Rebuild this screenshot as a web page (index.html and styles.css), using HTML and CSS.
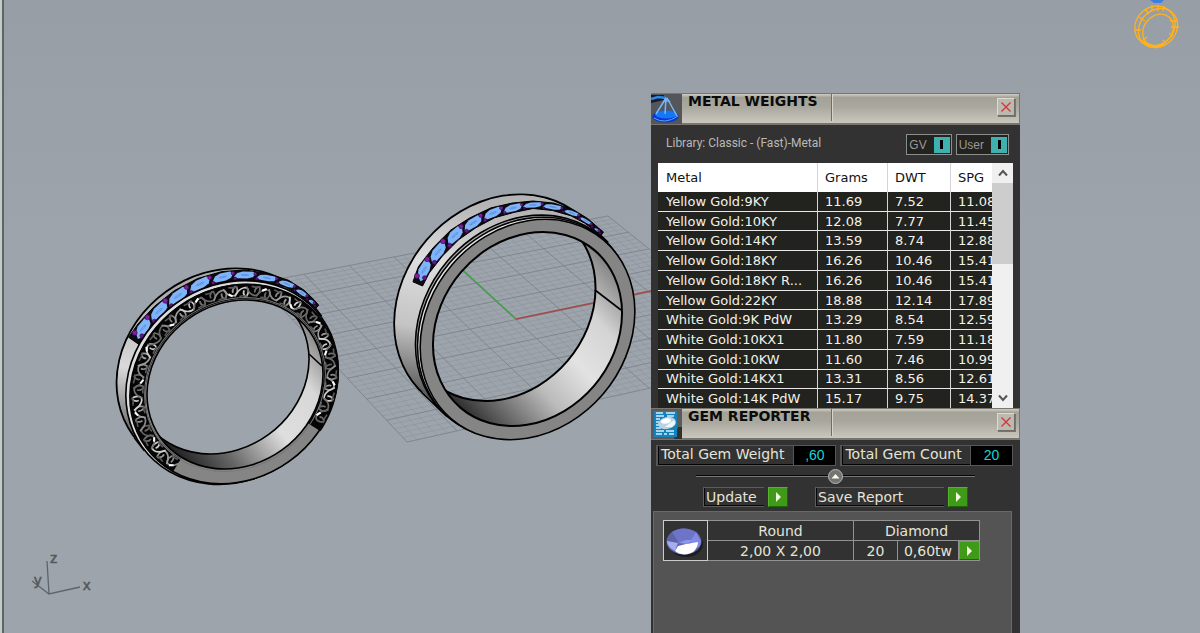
FILE: index.html
```html
<!DOCTYPE html>
<html lang="en">
<head>
<meta charset="utf-8">
<title>Ring Design Viewport</title>
<link rel="stylesheet" href="styles.css">
</head>
<body>
<main class="viewport">
  <svg class="scene" aria-label="Perspective viewport with two rings">
    <defs>
      <linearGradient id="bodyR" gradientUnits="userSpaceOnUse" x1="470" y1="200" x2="430" y2="420">
        <stop offset="0" stop-color="#b4b4b4"/><stop offset=".3" stop-color="#dedede"/><stop offset=".6" stop-color="#c4c4c4"/><stop offset=".85" stop-color="#6a6a6a"/><stop offset="1" stop-color="#333"/>
      </linearGradient>
      <linearGradient id="innerR" gradientUnits="userSpaceOnUse" x1="445" y1="400" x2="625" y2="235">
        <stop offset="0" stop-color="#222"/><stop offset=".1" stop-color="#555"/><stop offset=".32" stop-color="#bbb"/><stop offset=".5" stop-color="#e2e2e2"/><stop offset=".68" stop-color="#d4d4d4"/><stop offset=".85" stop-color="#8c8c8c"/><stop offset="1" stop-color="#222"/>
      </linearGradient>
      <linearGradient id="bodyL" gradientUnits="userSpaceOnUse" x1="160" y1="290" x2="140" y2="450">
        <stop offset="0" stop-color="#aaa"/><stop offset=".5" stop-color="#dadada"/><stop offset=".8" stop-color="#888"/><stop offset="1" stop-color="#333"/>
      </linearGradient>
      <linearGradient id="innerL" gradientUnits="userSpaceOnUse" x1="165" y1="445" x2="325" y2="325">
        <stop offset="0" stop-color="#1c1c1c"/><stop offset=".22" stop-color="#666"/><stop offset=".5" stop-color="#dedede"/><stop offset=".75" stop-color="#d8d8d8"/><stop offset="1" stop-color="#666"/>
      </linearGradient>
      <mask id="frontR" maskUnits="userSpaceOnUse" x="380" y="180" width="270" height="270"><rect x="380" y="180" width="270" height="270" fill="#fff"/><ellipse cx="527.5" cy="329" rx="103.4" ry="87.5" transform="rotate(-49.5 527.5 329)" fill="#000"/></mask>
      <mask id="backR" maskUnits="userSpaceOnUse" x="380" y="180" width="270" height="270"><rect x="380" y="180" width="270" height="270" fill="#fff"/><ellipse cx="501" cy="304" rx="103.4" ry="87.5" transform="rotate(-49.5 501 304)" fill="#000"/></mask>
      <clipPath id="holeR"><ellipse cx="527.5" cy="329" rx="103.4" ry="87.5" transform="rotate(-49.5 527.5 329)"/></clipPath>
      <mask id="frontL" maskUnits="userSpaceOnUse" x="100" y="250" width="260" height="250"><rect x="100" y="250" width="260" height="250" fill="#fff"/><ellipse cx="235" cy="384.5" rx="91.6" ry="80.6" transform="rotate(-35.7 235 384.5)" fill="#000"/></mask>
      <mask id="backL" maskUnits="userSpaceOnUse" x="100" y="250" width="260" height="250"><rect x="100" y="250" width="260" height="250" fill="#fff"/><ellipse cx="221" cy="369.5" rx="91.6" ry="80.6" transform="rotate(-35.7 221 369.5)" fill="#000"/></mask>
      <clipPath id="holeL"><ellipse cx="235" cy="384.5" rx="91.6" ry="80.6" transform="rotate(-35.7 235 384.5)"/></clipPath>
    </defs>

    <g id="grid" class="grid"></g>
    <path d="M516 319 440 249" stroke="#43a047" stroke-width="1.5"/>
    <path d="M516 319 790 262" stroke="#a24a4a" stroke-width="1.6"/>

    <!-- left ring -->
    <g fill="none" stroke="#000" stroke-width="1.6">
      <g mask="url(#frontL)">
        <path d="M134.9 437.3 144.9 450.3M311.1 303.7 321.1 316.7" stroke-width="3"/>
        <ellipse cx="223" cy="370.5" rx="110.6" ry="97" transform="rotate(-35.7 223 370.5)" stroke-width="2.4"/>
        <g clip-path="url(#backDiscL)"><rect x="100" y="250" width="260" height="250" fill="url(#bodyL)" stroke="none"/></g>
        <path d="M134.9 437.3 311.1 303.7 321.1 316.7 144.9 450.3Z" fill="url(#bodyL)" stroke="none"/>
        <g id="gemsL"></g>
        <ellipse cx="232" cy="382.5" rx="110.6" ry="97" transform="rotate(-35.7 232 382.5)" fill="#ddd"/>
        <ellipse cx="234" cy="384" rx="108.5" ry="95" transform="rotate(-35.7 234 384)" fill="#858585"/>
        <g id="filigree"></g>
        <ellipse cx="235" cy="384.5" rx="94" ry="83" transform="rotate(-35.7 235 384.5)" stroke="#777" stroke-width="1"/>
      </g>
      <g clip-path="url(#holeL)">
        <rect x="100" y="250" width="260" height="250" fill="url(#innerL)" mask="url(#backL)" stroke="none"/>
        <path d="M309 354 322 366"/>
        <ellipse cx="221" cy="369.5" rx="91.6" ry="80.6" transform="rotate(-35.7 221 369.5)"/>
      </g>
      <ellipse cx="235" cy="384.5" rx="91.6" ry="80.6" transform="rotate(-35.7 235 384.5)"/>
    </g>

    <!-- right ring -->
    <g fill="none" stroke="#000" stroke-width="1.6">
      <g mask="url(#frontR)">
        <path d="M422.2 391.9 447.2 415.9M582.8 219.1 607.8 243.1" stroke-width="3"/>
        <ellipse cx="502.5" cy="305.5" rx="118.2" ry="100" transform="rotate(-49.5 502.5 305.5)" stroke-width="2.4"/>
        <g clip-path="url(#backDiscR)"><rect x="380" y="180" width="270" height="270" fill="url(#bodyR)" stroke="none"/></g>
        <path d="M422.2 391.9 582.8 219.1 607.8 243.1 447.2 415.9Z" fill="url(#bodyR)" stroke="none"/>
        <g id="gemsR"></g>
        <ellipse cx="523.5" cy="326" rx="118.2" ry="100" transform="rotate(-49.5 523.5 326)" fill="#aaa"/>
        <ellipse cx="525.5" cy="328" rx="118" ry="100" transform="rotate(-49.5 525.5 328)" fill="#e4e4e4"/>
        <ellipse cx="527.5" cy="329.5" rx="117.4" ry="99.4" transform="rotate(-49.5 527.5 329.5)" fill="#858585"/>
      </g>
      <g clip-path="url(#holeR)">
        <rect x="380" y="180" width="270" height="270" fill="url(#innerR)" mask="url(#backR)" stroke="none"/>
        <path d="M595 290 621 310"/>
        <ellipse cx="501" cy="304" rx="103.4" ry="87.5" transform="rotate(-49.5 501 304)" stroke-width="2"/>
      </g>
      <ellipse cx="527.5" cy="329" rx="103.4" ry="87.5" transform="rotate(-49.5 527.5 329)" stroke-width="2"/>
    </g>
    <clipPath id="backDiscL"><ellipse cx="223" cy="370.5" rx="110" ry="96.4" transform="rotate(-35.7 223 370.5)"/></clipPath>
    <clipPath id="backDiscR"><ellipse cx="502.5" cy="305.5" rx="117.6" ry="99.4" transform="rotate(-49.5 502.5 305.5)"/></clipPath>

    <!-- wireframe ring -->
    <g fill="none" stroke="#ffb21c" stroke-width="1.3">
      <ellipse cx="1155" cy="26" rx="21" ry="19" transform="rotate(-40 1155 26)"/>
      <ellipse cx="1158" cy="28" rx="21" ry="18" transform="rotate(-45 1158 28)"/>
      <ellipse cx="1158" cy="30" rx="17" ry="14" transform="rotate(-50 1158 30)"/>
      <path d="M1152 5v6M1158 5v6M1164 6l-1 5M1145 9l4 5M1139 17l6 4M1135 30h6M1170 21h8M1171 27h8M1142 41l5-4M1150 48l2-4M1166 44l-3-4M1173 36l-4-3"/>
      <path d="M1143 42q12 8 21 2" stroke-width="3"/>
    </g>
    <path d="M1150 0h14l-3 3h-7z" fill="#3f7de0"/>

    <!-- axis gizmo -->
    <path d="M47 561 49 594 80 587M49 594 32 581" class="gizmo-line"/>
    <g class="gizmo-text"><text x="50" y="563">z</text><text x="83" y="590">x</text><text x="34" y="585">y</text></g>
  </svg>

  <div class="dock">
    <section class="window">
      <header class="titlebar">
        <svg class="titleicon" viewBox="0 0 31 30" aria-hidden="true">
          <rect width="31" height="30" fill="#55565a"/>
          <path d="M0 1h13v5L0 9z" fill="#171b2c"/>
          <path d="M0 5 7 3 15 4" stroke="#2c8ae8" stroke-width="2.500" fill="none"/>
          <path d="M15 3 20 8 12 8z" fill="#4fa0f5"/>
          <ellipse cx="14.500" cy="22.500" rx="13" ry="6" fill="#0636d6"/><ellipse cx="15" cy="20.500" rx="11" ry="4" fill="#1677f3"/>
          <path d="M15 4 5 20M16 4 26 22M15 4 14 20" stroke="#76b6ff" stroke-width="1.500" fill="none"/>
          <path d="M3 24q11 7 24-2" stroke="#63a5ff" fill="none"/>
        </svg>
        <h2 class="title">METAL WEIGHTS</h2>
        <button class="close" type="button" aria-label="Close Metal Weights"><svg viewBox="0 0 12 12"><path d="M1.500 1.500 10.500 10.500M10.500 1.500 1.500 10.500"/></svg></button>
      </header>
      <div class="metal">
        <div class="library">
          <span class="library-name">Library: Classic - (Fast)-Metal</span>
          <label class="toggle">GV<input type="checkbox" checked></label>
          <label class="toggle">User<input type="checkbox" checked></label>
        </div>
        <div class="list">
          <div class="list-view">
            <table class="metals">
              <colgroup><col class="c-metal"><col class="c-grams"><col class="c-dwt"><col></colgroup>
              <thead><tr><th>Metal</th><th>Grams</th><th>DWT</th><th>SPG</th></tr></thead>
              <tbody>
                <tr><td>Yellow Gold:9KY</td><td>11.69</td><td>7.52</td><td>11.08</td></tr>
                <tr><td>Yellow Gold:10KY</td><td>12.08</td><td>7.77</td><td>11.45</td></tr>
                <tr><td>Yellow Gold:14KY</td><td>13.59</td><td>8.74</td><td>12.88</td></tr>
                <tr><td>Yellow Gold:18KY</td><td>16.26</td><td>10.46</td><td>15.41</td></tr>
                <tr><td>Yellow Gold:18KY R...</td><td>16.26</td><td>10.46</td><td>15.41</td></tr>
                <tr><td>Yellow Gold:22KY</td><td>18.88</td><td>12.14</td><td>17.89</td></tr>
                <tr><td>White Gold:9K PdW</td><td>13.29</td><td>8.54</td><td>12.59</td></tr>
                <tr><td>White Gold:10KX1</td><td>11.80</td><td>7.59</td><td>11.18</td></tr>
                <tr><td>White Gold:10KW</td><td>11.60</td><td>7.46</td><td>10.99</td></tr>
                <tr><td>White Gold:14KX1</td><td>13.31</td><td>8.56</td><td>12.61</td></tr>
                <tr><td>White Gold:14K PdW</td><td>15.17</td><td>9.75</td><td>14.37</td></tr>
              </tbody>
            </table>
          </div>
          <div class="scrollbar">
            <button type="button" aria-label="Scroll up"><svg viewBox="0 0 10 8"><path d="M1 6.500 5 2 9 6.500"/></svg></button>
            <div class="thumb"></div>
            <button type="button" aria-label="Scroll down"><svg viewBox="0 0 10 8"><path d="M1 1.500 5 6 9 1.500"/></svg></button>
          </div>
        </div>
      </div>
    </section>

    <section class="window window-gems">
      <header class="titlebar">
        <svg class="titleicon" viewBox="0 0 31 30" aria-hidden="true">
          <rect width="31" height="30" fill="#5b5b5b"/><path d="M27 18h4v12h-8z" fill="#303030"/>
          <rect x="3" y="2" width="23" height="26" fill="#1682bd"/>
          <path d="M5 4h7M15 4h9M5 7h8M16 7h7M5 10h4M5 13h3M5 16h4M5 19h5M5 22h8M15 22h8M5 25h6M13 25h3M18 25h5" stroke="#d8eefa" stroke-width="1.500"/>
          <ellipse cx="16" cy="14" rx="9" ry="6" transform="rotate(-12 16 14)" fill="#b9d3e2"/>
          <ellipse cx="15" cy="12" rx="5" ry="2.500" transform="rotate(-12 15 12)" fill="#fff"/><path d="M14 18 23 11q3 4-2 7z" fill="#eef6fa"/>
        </svg>
        <h2 class="title">GEM REPORTER</h2>
        <button class="close" type="button" aria-label="Close Gem Reporter"><svg viewBox="0 0 12 12"><path d="M1.500 1.500 10.500 10.500M10.500 1.500 1.500 10.500"/></svg></button>
      </header>
      <div class="totals">
        <div class="total total-weight"><span>Total Gem Weight</span><output>,60</output></div>
        <div class="total total-count"><span>Total Gem Count</span><output>20</output></div>
      </div>
      <div class="divider">
        <button type="button" class="knob" aria-label="Collapse"><svg viewBox="0 0 17 17"><circle cx="8.500" cy="8.500" r="7" fill="#747474" stroke="#b9b9b0"/><path d="M4.500 10.500h8L8.500 6z" fill="#fffbe8"/></svg></button>
      </div>
      <div class="actions">
        <span class="action-name action-update" id="update">Update</span>
        <button class="go" type="button" aria-labelledby="update"><svg viewBox="0 0 18 18"><path d="M7 4 12 9 7 14z"/></svg></button>
        <span class="action-name action-save" id="save">Save Report</span>
        <button class="go" type="button" aria-labelledby="save"><svg viewBox="0 0 18 18"><path d="M7 4 12 9 7 14z"/></svg></button>
      </div>
      <div class="report">
        <table class="gem">
          <colgroup><col class="g-icon"><col class="g-shape"><col class="g-count"><col class="g-weight"><col class="g-go"></colgroup>
          <tbody>
          <tr>
            <td rowspan="2" class="gem-icon"><svg viewBox="0 0 42 38" aria-label="Round gem">
              <ellipse cx="22" cy="22" rx="17" ry="13" fill="#1d1d1d"/>
              <ellipse cx="20" cy="19.500" rx="17.500" ry="13" fill="#5d63a6"/>
              <path d="M8 10 Q19 3 32 10L29 18 15 21z" fill="#6e75c8"/>
              <path d="M3 19 14 21 11 29Q3 25 3 19z" fill="#a4adee"/>
              <path d="M32 10 37 19Q37 24 33 26L26 20z" fill="#828ae6"/>
              <path d="M11 29 14 24 22 22 34 20Q33 32 20 32.500 14 32 11 29z" fill="#fff"/>
              <path d="M14 21 22 18 29 18 24 22z" fill="#8d96ed"/>
            </svg></td>
            <td>Round</td><td colspan="3">Diamond</td>
          </tr>
          <tr><td>2,00 X 2,00</td><td>20</td><td>0,60tw</td><td class="go-cell"><button class="go" type="button" aria-label="Open gem row"><svg viewBox="0 0 18 18"><path d="M7 4 12 9 7 14z"/></svg></button></td></tr>
          </tbody>
        </table>
      </div>
    </section>
  </div>
</main>
<script src="scene.js"></script>
</body>
</html>
```
FILE: styles.css
```css
* { box-sizing: border-box; }
body { margin: 0; font-family: "DejaVu Sans", Verdana, sans-serif; font-size: 14px; color: #e4e4d8; }
button { padding: 0; border: 0; background: none; font: inherit; }
svg { display: block; }

.viewport {
  position: relative;
  height: 100vh;
  overflow: hidden;
  background: linear-gradient(#989ea6, #9da4ac 40%);
  border-left: 2px solid #c4ccc8;
}
.viewport::before { content: ""; position: absolute; inset: 0 auto 0 0; width: 2px; background: #5d6566; }
.scene { position: absolute; top: 0; left: -2px; width: calc(100% + 2px); height: 100%; }
.grid { fill: none; }
.grid .minor { stroke: #7f868f; stroke-opacity: .3; stroke-width: 1; }
.grid .major { stroke: #747a84; stroke-opacity: .7; stroke-width: 1; }
.gizmo-line { fill: none; stroke: #606366; stroke-width: 1.3; }
.gizmo-text { font-family: "Liberation Sans", Arial, sans-serif; font-size: 15px; fill: #55585b; stroke: #55585b; stroke-width: .5; }

.dock {
  position: absolute;
  top: 93px;
  left: 649px;
  bottom: 0;
  width: 369px;
  display: flex;
  flex-direction: column;
  background: #323232;
}
.window { display: flex; flex-direction: column; }
.window-gems { flex: 1; }

.titlebar {
  display: flex;
  height: 32px;
  border-top: 1px solid #78776f;
  border-bottom: 2px solid #77756d;
  border-right: 1px solid #77756d;
  background: linear-gradient(#cfcdc4, #a4a297 12%, #aaa89e 45%, #c9c7be);
}
.titleicon { width: 31px; height: 30px; }
.title {
  width: 150px;
  margin: 0 0 2px;
  padding-left: 6px;
  border-right: 1px solid #6f6d66;
  box-shadow: 1px 0 #d6d4cc;
  font-size: 14px;
  line-height: 14px;
  color: #0b0b0b;
}
.close {
  width: 18px;
  height: 18px;
  margin: 4px 4px 0 auto;
  padding: 2px;
  background: #bcbab0;
  border: 1px solid #dddbd2;
  border-right-color: #6e6c65;
  border-bottom-color: #6e6c65;
  box-shadow: 1px 1px #77756d;
}
.close path { stroke: #d13636; stroke-width: 1.3; fill: none; }

.metal { padding: 9px 7px 0; }
.library { display: flex; gap: 4px; padding: 0 4px 8px 8px; }
.library-name { flex: 1; font: 12px/19px Roboto, "Liberation Sans", Arial, sans-serif; color: #b9b9b9; }
.toggle {
  display: flex;
  align-items: center;
  gap: 7px;
  height: 21px;
  padding: 1px 0 1px 2px;
  border: 1px solid #8d8d8d;
  background: #22221e;
  font: 12px/20px "Liberation Sans", Arial, sans-serif;
  color: #999;
}
.toggle input {
  appearance: none;
  width: 16px;
  height: 16px;
  margin: 0 1px 0 0;
  background: linear-gradient(#000, #000) center / 3px 9px no-repeat #3fb0b0;
}

.list { display: flex; }
.list-view { flex: 1; min-width: 0; overflow: hidden; background: #22221e; }
.metals {
  width: 100%;
  height: 245px;
  table-layout: fixed;
  border-collapse: separate;
  border-spacing: 0;
  font-size: 13px;
  color: #f2f2ea;
}
.c-metal { width: 160px; }
.c-grams { width: 70px; }
.c-dwt { width: 63px; }
.metals th, .metals td {
  padding: 1px 0 0 8px;
  text-align: left;
  font-weight: 400;
  white-space: nowrap;
  overflow: hidden;
  border-right: 1px solid #d5d5d5;
  line-height: 16px;
}
.metals th { height: 29px; background: #fff; color: #111; }
.metals td { border-bottom: 1px solid #e9e9e9; }
.metals th:nth-child(n+2), .metals td:nth-child(n+2) { padding-left: 7px; }
.metals td:last-child, .metals th:last-child { border-right: 0; }
.metals tr:last-child td { border-bottom: 0; }
.scrollbar { display: flex; flex-direction: column; width: 21px; background: #f0f0f0; }
.scrollbar button { display: grid; place-items: center; height: 20px; }
.scrollbar button:last-child { margin-top: auto; }
.scrollbar svg { width: 10px; height: 8px; }
.scrollbar path { fill: none; stroke: #555; stroke-width: 2; }
.thumb { height: 81px; background: #cdcdcd; }

.totals { display: flex; gap: 4px; padding: 5px 7px 0 5px; }
.total { display: flex; height: 21px; border: 1px solid #565656; border-left-width: 2px; line-height: 17px; }
.total-weight { flex: 181; }
.total-count { flex: 173; }
.total span { flex: 1; padding-left: 2px; border-bottom: 1px solid #050505; border-left: 1px solid #050505; white-space: nowrap; }
.total output {
  width: 42px;
  padding-top: 1px;
  border-left: 1px solid #565656;
  background: #000;
  color: #12d4d4;
  font-family: "Liberation Sans", Arial, sans-serif;
  text-align: center;
}
.divider {
  display: flex;
  justify-content: center;
  height: 18px;
  margin: 1px 45px 0;
  background: linear-gradient(transparent 8px, #080808 8px 9px, #777 9px 10px, transparent 10px);
}
.knob svg { width: 17px; height: 17px; }
.actions { display: flex; gap: 4px; padding: 2px 52px 0; }
.action-name {
  height: 20px;
  padding-left: 2px;
  border: 1px solid #5c5c5c;
  border-right: 0;
  box-shadow: inset 1px -1px #080808;
  line-height: 19px;
}
.action-update { width: 61px; }
.action-save { width: 129px; margin-left: 23px; }
.go { width: 20px; height: 20px; background: #3f9a18; border: 1px solid #57b32d; border-right-color: #1f6606; border-bottom-color: #1f6606; }
.go svg { width: 18px; height: 18px; }
.go path { fill: #f4f6df; }

.report {
  flex: 1;
  margin: 4px 8px 0 2px;
  padding: 8px 9px;
  border: 1px solid #686868;
  border-bottom: 0;
  background: #545454;
}
.gem { width: 317px; border-collapse: collapse; table-layout: fixed; background: #323232; text-align: center; }
.g-icon { width: 44px; }
.g-shape { width: 146px; }
.g-count { width: 44px; }
.g-weight { width: 61px; }
.gem td { height: 20px; padding: 0; border: 1px solid #929292; line-height: 18px; }
.gem .gem-icon { border: 1px solid #ccc; }
.gem-icon svg { width: 42px; height: 38px; }
.gem .go-cell .go { display: block; width: 21px; height: 19px; }
```
FILE: scene.js
```js
const NS = "http://www.w3.org/2000/svg";

function add(parent, tag, attrs) {
  const node = document.createElementNS(NS, tag);
  for (const name in attrs) node.setAttribute(name, attrs[name]);
  parent.appendChild(node);
  return node;
}

// Construction plane: unit square projected to four screen corners.
function projector(a, b, c, d) {
  const sx = a[0] - b[0] + c[0] - d[0], sy = a[1] - b[1] + c[1] - d[1];
  const dx1 = b[0] - c[0], dy1 = b[1] - c[1], dx2 = d[0] - c[0], dy2 = d[1] - c[1];
  const det = dx1 * dy2 - dx2 * dy1;
  const g = (sx * dy2 - dx2 * sy) / det, h = (dx1 * sy - sx * dy1) / det;
  return (u, v) => {
    const w = g * u + h * v + 1;
    return [
      ((b[0] - a[0] + g * b[0]) * u + (d[0] - a[0] + h * d[0]) * v + a[0]) / w,
      ((b[1] - a[1] + g * b[1]) * u + (d[1] - a[1] + h * d[1]) * v + a[1]) / w
    ];
  };
}
const plane = projector([258, 283], [608, 216], [785.5, 358], [407, 442]);
const grid = document.getElementById("grid");
const divisions = 40;
for (let i = 0; i <= divisions; i++) {
  const t = i / divisions;
  const kind = i % 5 === 0 ? "major" : "minor";
  const d = "M" + plane(t, 0) + "L" + plane(t, 1) + "M" + plane(0, t) + "L" + plane(1, t);
  add(grid, "path", { d, class: kind });
}

// Channel of stones: [x, y, half width across the band]
function channel(id, stones, start, end) {
  const group = document.getElementById(id);
  const up = [], down = [];
  const all = [start, ...stones, end];
  all.forEach((p, i) => {
    const q = all[Math.min(i + 1, all.length - 1)], o = all[Math.max(i - 1, 0)];
    const l = Math.hypot(q[0] - o[0], q[1] - o[1]);
    p.t = [(q[0] - o[0]) / l, (q[1] - o[1]) / l];
    up.push([p[0] + p.t[1] * (p[2] + 1.5), p[1] - p.t[0] * (p[2] + 1.5)]);
    down.unshift([p[0] - p.t[1] * (p[2] + 1), p[1] + p.t[0] * (p[2] + 1)]);
  });
  add(group, "path", { d: "M" + up.concat(down).join("L") + "Z", fill: "#0d0a12", stroke: "#000", "stroke-width": 1 });
  stones.forEach((p, i) => {
    const next = stones[i + 1] || end;
    const reach = Math.hypot(next[0] - p[0], next[1] - p[1]) * 0.5;
    const angle = Math.atan2(p.t[1], p.t[0]) * 180 / Math.PI;
    const spin = `translate(${p[0]} ${p[1]}) rotate(${angle})`;
    const h = p[2];
    add(group, "path", { transform: spin, d: `M${-reach} ${h * 0.6}L${-reach * 0.7} ${-h * 0.5}L${-reach * 0.2} ${-h}H${reach * 0.7}L${reach} ${-h * 0.5}L${reach * 0.7} ${h * 0.6}L${reach * 0.2} ${h}H${-reach * 0.7}Z`, fill: "#80b4fa", stroke: "none" });
    add(group, "ellipse", { transform: spin, rx: reach * 0.35, ry: h * 0.15, fill: "none", stroke: "#5c8fd6", "stroke-width": 0.8 });
  });
  [...stones, end].forEach((p, i) => {
    const prev = i ? stones[i - 1] : start;
    const mx = (p[0] + prev[0]) / 2, my = (p[1] + prev[1]) / 2;
    const h = p[2], r = Math.max(1.2, h * 0.5);
    const back = 1.2;
    add(group, "circle", { cx: mx + p.t[1] * h * 0.8 - p.t[0] * back, cy: my - p.t[0] * h * 0.8 - p.t[1] * back, r, fill: "#7d1fa2", stroke: "#32083f", "stroke-width": 0.6 });
    add(group, "circle", { cx: mx - p.t[1] * h * 0.7 + p.t[0] * back, cy: my + p.t[0] * h * 0.7 + p.t[1] * back, r: r * 0.85, fill: "#6a128d", stroke: "#32083f", "stroke-width": 0.6 });
  });
}
channel("gemsL",
  [[143, 328, 5], [159, 311, 5], [178, 296, 5], [200, 284, 4.5], [223, 277, 4], [245, 275, 3.5], [267, 278, 3], [287, 284, 2.5], [302, 293, 2], [312, 302, 1.5]],
  [134, 341, 5], [317, 307, 1]);
channel("gemsR",
  [[424, 270, 5], [438, 252, 5], [455, 235, 5], [473, 223, 4.5], [493, 213, 4], [513, 208, 3.5], [533, 205, 2.5], [553, 207, 2.5], [572, 213, 2], [586, 221, 1.5], [597, 230, 1]],
  [418, 284, 4], [602, 234, 1]);

// Engraved scrollwork on the side face of the left ring.
const filigree = document.getElementById("filigree");
const tilt = -35.7 * Math.PI / 180;
function onFace(a, k) {
  const x = 91.6 * k * Math.cos(a), y = 80.6 * k * Math.sin(a);
  return [234.5 + x * Math.cos(tilt) - y * Math.sin(tilt), 384.2 + x * Math.sin(tilt) + y * Math.cos(tilt)];
}
const from = 2.77, to = 7.46;
let arc = "";
for (let a = from; a <= to; a += 0.04) arc += (arc ? "L" : "M") + onFace(a, 1.1);
add(filigree, "path", { d: arc, stroke: "#050505", "stroke-width": 15 });
for (let i = 0, a = from + 0.06; a < to - 0.06; i++, a += 0.115) {
  const side = i % 2 ? 1 : -1;
  const tone = ["#8a8a8a", "#cfcfcf", "#666", "#9c9c9c", "#707070"][(i * 3) % 5];
  const at = (da, k) => onFace(a + da, 1.1 + side * k);
  add(filigree, "path", { d: `M${at(-0.08, 0.055)}C${at(-0.03, -0.07)} ${at(0.07, -0.07)} ${at(0.06, 0.02)}S${at(0, 0.03)} ${at(0.015, -0.01)}`, stroke: tone, "stroke-width": 1.7 });
  add(filigree, "path", { d: `M${at(-0.03, 0.06)}Q${at(0.02, 0.045)} ${at(0.06, 0.062)}`, stroke: "#5a5a5a", "stroke-width": 1.6 });
  if (i % 3 === 0) add(filigree, "path", { d: `M${at(-0.03, -0.02)}L${at(0.01, -0.05)}`, stroke: "#fff", "stroke-width": 2 });
}
```
